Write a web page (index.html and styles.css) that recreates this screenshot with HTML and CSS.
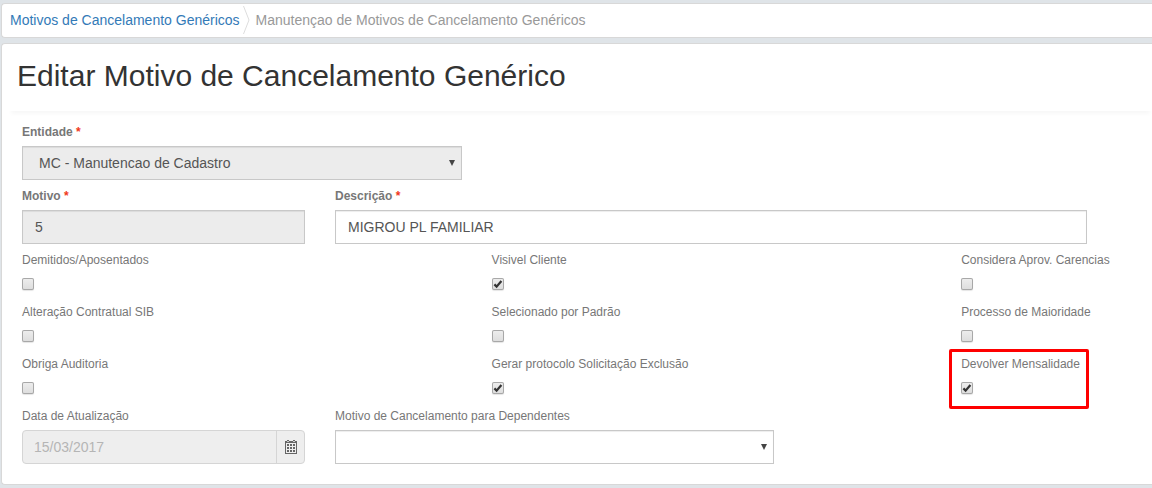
FILE: index.html
```
<!DOCTYPE html>
<html lang="pt-BR">
<head>
    <meta charset="utf-8">
    <title>Editar Motivo de Cancelamento Genérico</title>
    <link rel="stylesheet" href="styles.css">
</head>
<body>
    <nav class="breadcrumb">
        <a href="#">Motivos de Cancelamento Genéricos</a>
        <svg class="separator" width="7" height="28" viewBox="0 0 7 28"><path d="M.5 0L6 14L.5 28" fill="none" stroke="#ddd"/></svg>
        <span>Manutençao de Motivos de Cancelamento Genéricos</span>
    </nav>

    <div class="panel">
        <h1>Editar Motivo de Cancelamento Genérico</h1>
        <form class="form">
            <div class="row">
                <div class="field medium">
                    <label class="required">Entidade <b>*</b></label>
                    <div class="select disabled">MC - Manutencao de Cadastro</div>
                </div>
            </div>
            <div class="row">
                <div class="field small">
                    <label class="required">Motivo <b>*</b></label>
                    <input class="control disabled" type="text" value="5" readonly>
                </div>
                <div class="field large">
                    <label class="required">Descrição <b>*</b></label>
                    <input class="control" type="text" value="MIGROU PL FAMILIAR">
                </div>
            </div>
            <div class="checks">
                <div class="field">
                    <label>Demitidos/Aposentados</label>
                    <span class="check"></span>
                </div>
                <div class="field">
                    <label>Visivel Cliente</label>
                    <span class="check"><svg width="12" height="12" viewBox="0 0 12 12"><path d="M2.4 6.4L4.6 8.6L9.4 3"/></svg></span>
                </div>
                <div class="field">
                    <label>Considera Aprov. Carencias</label>
                    <span class="check"></span>
                </div>
                <div class="field">
                    <label>Alteração Contratual SIB</label>
                    <span class="check"></span>
                </div>
                <div class="field">
                    <label>Selecionado por Padrão</label>
                    <span class="check"></span>
                </div>
                <div class="field">
                    <label>Processo de Maioridade</label>
                    <span class="check"></span>
                </div>
                <div class="field">
                    <label>Obriga Auditoria</label>
                    <span class="check"></span>
                </div>
                <div class="field">
                    <label>Gerar protocolo Solicitação Exclusão</label>
                    <span class="check"><svg width="12" height="12" viewBox="0 0 12 12"><path d="M2.4 6.4L4.6 8.6L9.4 3"/></svg></span>
                </div>
                <div class="field highlight">
                    <label>Devolver Mensalidade</label>
                    <span class="check"><svg width="12" height="12" viewBox="0 0 12 12"><path d="M2.4 6.4L4.6 8.6L9.4 3"/></svg></span>
                </div>
            </div>
            <div class="row">
                <div class="field small">
                    <label>Data de Atualização</label>
                    <div class="date">
                        <span class="date-value">15/03/2017</span>
                        <span class="date-button">
                            <svg width="12" height="14" viewBox="0 0 12 14" shape-rendering="crispEdges">
                                <path d="M0 1h12v13H0zM1 3v10h10V3z" fill="#666" fill-rule="evenodd"/>
                                <path d="M2 0h2v1H2zM8 0h2v1H8z" fill="#666"/>
                                <path d="M2 1h2v1H2zM8 1h2v1H8z" fill="#ccc"/>
                                <path d="M2 4h2v2H2zM5 4h2v2H5zM8 4h2v2H8zM2 7h2v2H2zM5 7h2v2H5zM8 7h2v2H8zM2 10h2v2H2zM5 10h2v2H5zM8 10h2v2H8z" fill="#666"/>
                            </svg>
                        </span>
                    </div>
                </div>
                <div class="field medium">
                    <label>Motivo de Cancelamento para Dependentes</label>
                    <div class="select"></div>
                </div>
            </div>
        </form>
    </div>
</body>
</html>
```

FILE: styles.css
```
* {
    box-sizing: border-box;
}
body {
    margin: 0;
    padding: 3px 0 0 1px;
    height: 488px;
    overflow: hidden;
    background-color: #dfe4e8;
    font-family: "Liberation Sans", Arial, sans-serif;
    font-size: 14px;
    color: #555;
}
.breadcrumb,
.panel {
    background-color: #fff;
    border: 1px solid #d8d8d8;
    border-right: 0;
    border-radius: 4px 0 0 4px;
}
.breadcrumb {
    display: flex;
    align-items: center;
    height: 35px;
    padding: 0 0 2px 8px;
    color: #999;
}
.breadcrumb a {
    color: #337ab7;
    text-decoration: none;
}
.separator {
    margin: 0 6px 0 3px;
}
.panel {
    height: 442px;
    margin-top: 5px;
}
h1 {
    height: 67px;
    margin: 0 0 0 7px;
    padding-left: 8px;
    font-size: 30px;
    font-weight: normal;
    line-height: 64px;
    color: #333;
    box-shadow: 0 5px 4px -2px #f8f8f8;
}
.form {
    padding: 7px 0 0 20px;
}
.row {
    display: flex;
    gap: 30px;
}
.checks {
    display: grid;
    grid-template-columns: 469.6px 469.6px 1fr;
    grid-auto-rows: 52px;
}
.field {
    padding: 5px 0 2px;
}
.small {
    width: 283px;
}
.medium {
    width: 439.4px;
}
.large {
    width: 752px;
}
label {
    display: block;
    margin-bottom: 5px;
    font-size: 12px;
    line-height: 18px;
    color: #777;
}
.required {
    font-weight: bold;
}
.required b {
    color: #f0371c;
}
.control,
.select {
    display: flex;
    align-items: center;
    width: 100%;
    height: 34px;
    padding: 0 12px;
    background-color: #fff;
    border: 1px solid #c8c8c8;
    box-shadow: inset 0 1px 1px rgba(0, 0, 0, 0.075);
    font: inherit;
    color: #555;
}
.select {
    padding: 0 6px 0 16px;
}
.select::after {
    content: "";
    margin-left: auto;
    border: solid transparent;
    border-width: 6px 3px 0;
    border-top-color: #444;
}
.select.disabled {
    width: 440px;
}
.disabled {
    background-color: #ececec;
}
.check {
    display: block;
    width: 12px;
    height: 12px;
    margin-top: 9px;
    background: linear-gradient(#eee, #dcdcdc);
    border-radius: 2px;
    box-shadow: inset 0 0 0 1px #a8a8a8, 0 1px 1px #e5e5e5;
}
.check svg {
    display: block;
    fill: none;
    stroke: #333;
    stroke-width: 2.2;
}
.highlight {
    position: relative;
}
.highlight::after {
    content: "";
    box-sizing: border-box;
    position: absolute;
    top: -1px;
    left: -12px;
    width: 140px;
    height: 60px;
    border: 3px solid #fe0000;
    border-radius: 2px;
}
.date {
    display: flex;
    height: 34px;
    background-color: #eee;
    border: 1px solid #d5d5d5;
    border-radius: 4px;
    color: #b5b5b5;
}
.date-value {
    flex: 1;
    padding-left: 11px;
    line-height: 32px;
}
.date-button {
    display: flex;
    align-items: center;
    justify-content: center;
    width: 28px;
    border-left: 1px solid #d5d5d5;
}
```
